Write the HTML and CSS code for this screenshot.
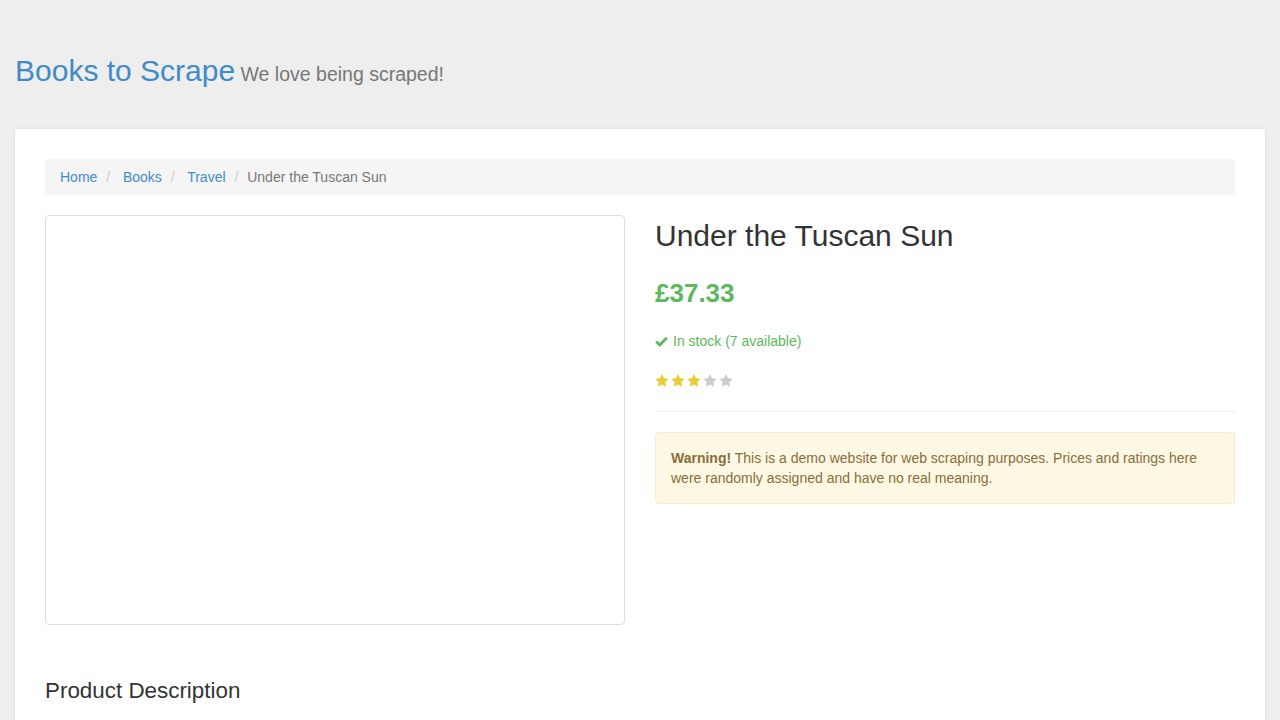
FILE: index.html
```html
<!DOCTYPE html>
<html lang="en">
<head>
<meta charset="utf-8">
<title>Under the Tuscan Sun | Books to Scrape - Sandbox</title>
<link rel="stylesheet" href="styles.css">
</head>
<body>
<header class="header">
  <div class="brand"><a href="#" class="brand-link">Books to Scrape</a><small class="tagline"> We love being scraped!</small></div>
</header>
<div class="page">
  <ul class="breadcrumb">
    <li><a href="#">Home</a></li>
    <li> <a href="#">Books</a></li>
    <li> <a href="#">Travel</a></li>
    <li class="active">Under the Tuscan Sun</li>
  </ul>
  <div class="product">
    <div class="thumbnail"><div class="thumb-inner"></div></div>
    <div class="product-main">
      <h1 class="title">Under the Tuscan Sun</h1>
      <p class="price">£37.33</p>
      <p class="stock"><svg class="check" width="13" height="11" viewBox="0 0 13 11"><path d="M1.2 5.6 L4.8 9 L11.8 1.8" fill="none" stroke="#5cb85c" stroke-width="2.8" stroke-linejoin="miter"/></svg>In stock (7 available)</p>
      <div class="stars">
        <svg class="star on" width="14" height="13" viewBox="0 0 14 13"><path d="M7 0 L9.06 4.17 L13.66 4.84 L10.33 8.08 L11.11 12.66 L7 10.5 L2.89 12.66 L3.67 8.08 L0.34 4.84 L4.94 4.17 Z"/></svg>
        <svg class="star on" width="14" height="13" viewBox="0 0 14 13"><path d="M7 0 L9.06 4.17 L13.66 4.84 L10.33 8.08 L11.11 12.66 L7 10.5 L2.89 12.66 L3.67 8.08 L0.34 4.84 L4.94 4.17 Z"/></svg>
        <svg class="star on" width="14" height="13" viewBox="0 0 14 13"><path d="M7 0 L9.06 4.17 L13.66 4.84 L10.33 8.08 L11.11 12.66 L7 10.5 L2.89 12.66 L3.67 8.08 L0.34 4.84 L4.94 4.17 Z"/></svg>
        <svg class="star" width="14" height="13" viewBox="0 0 14 13"><path d="M7 0 L9.06 4.17 L13.66 4.84 L10.33 8.08 L11.11 12.66 L7 10.5 L2.89 12.66 L3.67 8.08 L0.34 4.84 L4.94 4.17 Z"/></svg>
        <svg class="star" width="14" height="13" viewBox="0 0 14 13"><path d="M7 0 L9.06 4.17 L13.66 4.84 L10.33 8.08 L11.11 12.66 L7 10.5 L2.89 12.66 L3.67 8.08 L0.34 4.84 L4.94 4.17 Z"/></svg>
      </div>
      <hr class="rule">
      <div class="alert"><strong>Warning!</strong> This is a demo website for web scraping purposes. Prices and ratings here were randomly assigned and have no real meaning.</div>
    </div>
  </div>
  <h2 class="sub-header">Product Description</h2>
</div>
</body>
</html>
```
FILE: styles.css
```css
html, body {
  margin: 0;
  padding: 0;
}
body {
  background: #eeeeee;
  font-family: "Liberation Sans", Arial, sans-serif;
  font-size: 14px;
  line-height: 20px;
  color: #333333;
}
a {
  color: #428bca;
  text-decoration: none;
}
.header {
  padding: 54px 15px 0;
}
.brand {
  font-size: 30px;
  line-height: 33px;
  white-space: nowrap;
}
.tagline {
  font-size: 19.5px;
  line-height: 1;
  color: #777777;
}
.page {
  margin: 42px 15px 0;
  background: #ffffff;
  padding: 30px 30px 60px;
  box-shadow: 0 0 3px rgba(0, 0, 0, 0.12);
}
.breadcrumb {
  list-style: none;
  margin: 0 0 20px;
  padding: 8px 15px;
  background: #f5f5f5;
  border-radius: 4px;
}
.breadcrumb li {
  display: inline-block;
}
.breadcrumb li + li::before {
  content: "/\00a0";
  padding: 0 5px;
  color: #cccccc;
}
.breadcrumb .active {
  color: #777777;
}
.product {
  display: grid;
  grid-template-columns: 580px 580px;
  column-gap: 30px;
  align-items: start;
}
.thumbnail {
  box-sizing: border-box;
  height: 410px;
  padding: 4px;
  border: 1px solid #dddddd;
  border-radius: 4px;
  background: #ffffff;
}
.thumb-inner {
  height: 100%;
}
.title {
  margin: 4px 0 0;
  font-size: 30px;
  line-height: 33px;
  font-weight: 400;
  color: #333333;
}
.price {
  margin: 27px 0 0;
  font-size: 26px;
  line-height: 29px;
  font-weight: 700;
  color: #5cb85c;
}
.stock {
  margin: 23px 0 0;
  color: #5cb85c;
  display: flex;
  align-items: center;
}
.check {
  display: block;
  margin: 1px 5px 0 0;
}
.stars {
  margin-top: 23px;
  display: flex;
  gap: 2px;
  height: 13px;
}
.star {
  display: block;
  fill: #cccccc;
}
.star.on {
  fill: #e6ce31;
}
.rule {
  margin: 24px 0 20px;
  border: 0;
  border-top: 1px solid #eeeeee;
  height: 0;
}
.alert {
  padding: 15px;
  background: #fcf8e3;
  border: 1px solid #faebcc;
  border-radius: 4px;
  color: #8a6d3b;
}
.alert strong {
  font-weight: 700;
}
.sub-header {
  margin: 54px 0 0;
  font-size: 22.4px;
  line-height: 24px;
  font-weight: 400;
  color: #333333;
}
```
